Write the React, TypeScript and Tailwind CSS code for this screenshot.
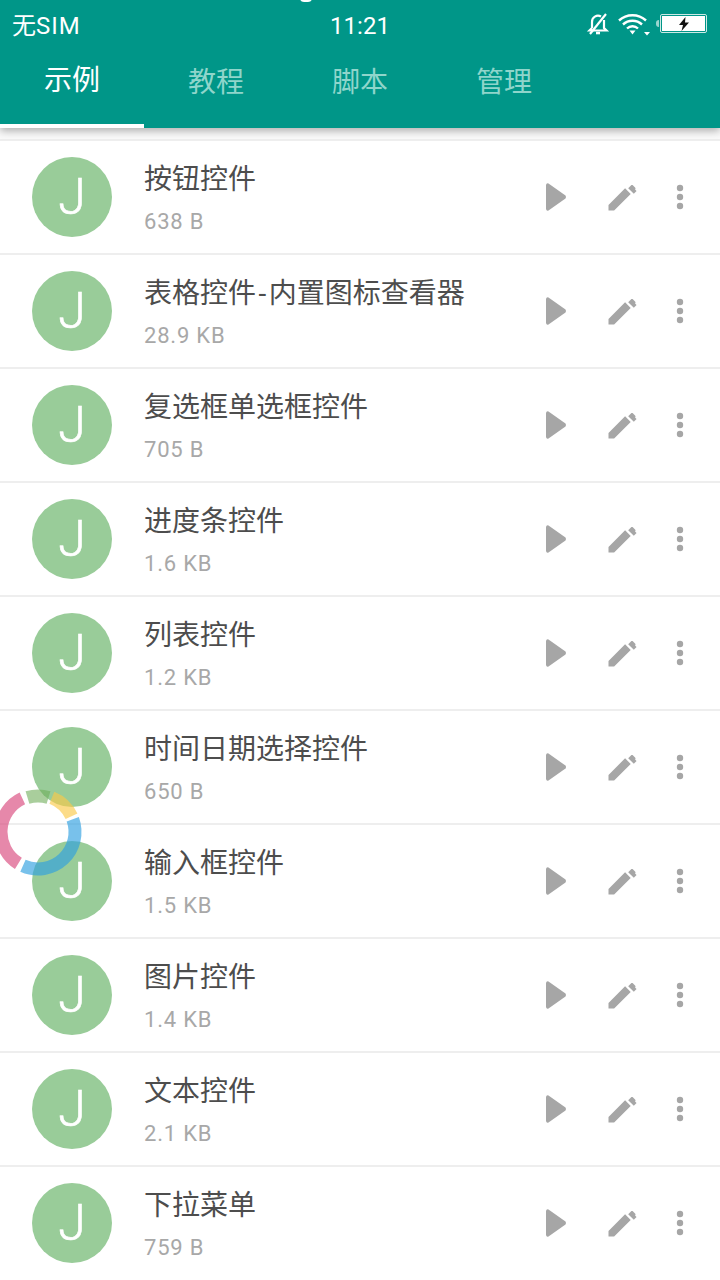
const scripts = [
  { name: "按钮控件", size: "638 B" },
  { name: "表格控件-内置图标查看器", size: "28.9 KB" },
  { name: "复选框单选框控件", size: "705 B" },
  { name: "进度条控件", size: "1.6 KB" },
  { name: "列表控件", size: "1.2 KB" },
  { name: "时间日期选择控件", size: "650 B" },
  { name: "输入框控件", size: "1.5 KB" },
  { name: "图片控件", size: "1.4 KB" },
  { name: "文本控件", size: "2.1 KB" },
  { name: "下拉菜单", size: "759 B" },
];

const tabs = ["示例", "教程", "脚本", "管理"];

const fontStack = { fontFamily: "Roboto, 'Noto Sans CJK SC', sans-serif" };

function PlayIcon() {
  return (
    <svg width="24" height="32" viewBox="0 0 24 32" className="shrink-0 text-[#a6a6a6]">
      <path d="M4.5 2.5 L21.5 14.6 Q22.5 16 21.5 17.4 L4.5 29.5 Q2.5 30.5 2 28 V4 Q2.5 1.5 4.5 2.5Z" fill="currentColor" />
    </svg>
  );
}

function EditIcon() {
  return (
    <svg width="36" height="36" viewBox="0 0 24 24" className="shrink-0 text-[#a6a6a6]">
      <path
        fill="currentColor"
        d="M3 17.25V21h3.75L17.81 9.94l-3.75-3.75L3 17.25zM20.71 7.04c.39-.39.39-1.02 0-1.41l-1.34-1.34c-.39-.39-1.02-.39-1.41 0l-1.83 1.83 3.75 3.75 1.83-1.83z"
      />
    </svg>
  );
}

function MoreIcon() {
  return (
    <svg width="8" height="26" viewBox="0 0 8 26" className="shrink-0 text-[#a6a6a6]">
      <circle cx="4" cy="4" r="3.2" fill="currentColor" />
      <circle cx="4" cy="13" r="3.2" fill="currentColor" />
      <circle cx="4" cy="22" r="3.2" fill="currentColor" />
    </svg>
  );
}

function StatusIcons() {
  return (
    <div className="mb-[5px] flex items-center">
      <svg width="24" height="24" viewBox="0 0 24 24" fill="none" stroke="white" strokeWidth="2.2" className="mr-2">
        <path d="M6 16V10a6 6 0 0 1 9-5.5M18 8v8l2.5 2.5H3.5L6 16" />
        <path d="M10 21h4" strokeWidth="2.6" />
        <path d="M4 22 20 2" />
      </svg>
      <svg width="32" height="24" viewBox="0 0 32 24" fill="none" stroke="white" strokeWidth="2.4">
        <path d="M1 8.5a20 20 0 0 1 27 0" />
        <path d="M5 12.5a14 14 0 0 1 19 0" />
        <path d="M9 16.5a8 8 0 0 1 11 0" />
        <path d="M11.5 18.5h6l-3 4z" fill="white" stroke="none" />
        <path d="M26 20h6l-3 3.5z" fill="white" stroke="none" />
      </svg>
      <div className="ml-[6px] h-[7px] w-[3px] rounded-l-sm bg-white/60" />
      <div className="ml-[1px] h-[19px] w-[47px] rounded-[2px] border border-[#cdeae6] p-[1px]">
        <div className="flex h-full items-center justify-center bg-white">
          <svg width="12" height="14" viewBox="0 0 12 14">
            <path d="M7.5 0 1 8h4l-1.5 6L11 5.5H7z" fill="#111" />
          </svg>
        </div>
      </div>
    </div>
  );
}

// Floating launcher ring, half off the left screen edge
function FloatingRing() {
  const arc = (a: number, b: number, r: number) => {
    const p = (d: number) => {
      const t = (d * Math.PI) / 180;
      return `${50 + r * Math.cos(t)} ${50 + r * Math.sin(t)}`;
    };
    return `M${p(a)} A${r} ${r} 0 ${b - a > 180 ? 1 : 0} 1 ${p(b)}`;
  };
  return (
    <svg width="100" height="100" viewBox="0 0 100 100" fill="none" className="absolute left-[-12px] top-[781.5px]">
      <path d={arc(122, 245, 37)} stroke="#d9487d" strokeOpacity="0.65" strokeWidth="13" />
      <path d={arc(253, 287, 36)} stroke="#6fae5a" strokeOpacity="0.6" strokeWidth="13" />
      <path d={arc(292, 335, 37)} stroke="#fbc94a" strokeOpacity="0.65" strokeWidth="13" />
      <path d={arc(340, 474, 37)} stroke="#2f9fe0" strokeOpacity="0.65" strokeWidth="13" />
    </svg>
  );
}

export default function App() {
  return (
    <div className="relative h-[1280px] w-[720px] overflow-hidden bg-white" style={fontStack}>
      <header className="relative z-10 h-[128px] bg-[#009688] text-white shadow-[0_3px_8px_rgba(0,0,0,0.3)]">
        <div className="absolute left-[300px] top-[-6px] h-[8px] w-[12px] rounded-full bg-white" />
        <div className="relative flex h-[50px] items-center justify-between pl-3 pr-[13px] pt-[2px]">
          <span className="text-[24px] leading-none">
            无<span className="tracking-[1px]">SIM</span>
          </span>
          <span className="absolute left-0 right-0 text-center text-[24px] leading-none">11:21</span>
          <StatusIcons />
        </div>
        <nav className="flex h-[78px]">
          {tabs.map((tab, i) => (
            <div
              key={tab}
              className={`flex w-[144px] items-center justify-center pb-3 text-[28px] ${
                i === 0 ? "border-b-4 border-white text-white" : "text-[#8fd5cb]"
              }`}
            >
              {tab}
            </div>
          ))}
        </nav>
      </header>

      <main className="bg-[#fafafa] pt-[11px]">
        <ul className="bg-white">
          {scripts.map((item) => {
            const [head, tail] = item.name.split("-");
            return (
              <li key={item.name} className="flex h-[114px] items-center border-t-2 border-[#eeeeee] pl-8 pr-[36px]">
                <div className="flex h-[80px] w-[80px] shrink-0 items-center justify-center rounded-full bg-[#99cc99] text-[50px] font-light text-white [-webkit-text-stroke:0.6px_white]">
                  J
                </div>
                <div className="ml-8 min-w-0 flex-1 pt-[3px]">
                  <div className="text-[28px] leading-[36px] text-[#4d4d4d]">
                    {head}
                    {tail && (
                      <>
                        <span className="mx-[2.5px]">-</span>
                        {tail}
                      </>
                    )}
                  </div>
                  <div className="mt-[10px] text-[22px] leading-[28px] tracking-[0.8px] text-[#a8a8a8]">{item.size}</div>
                </div>
                <PlayIcon />
                <div className="ml-9">
                  <EditIcon />
                </div>
                <div className="ml-9">
                  <MoreIcon />
                </div>
              </li>
            );
          })}
        </ul>
      </main>

      <FloatingRing />
    </div>
  );
}
